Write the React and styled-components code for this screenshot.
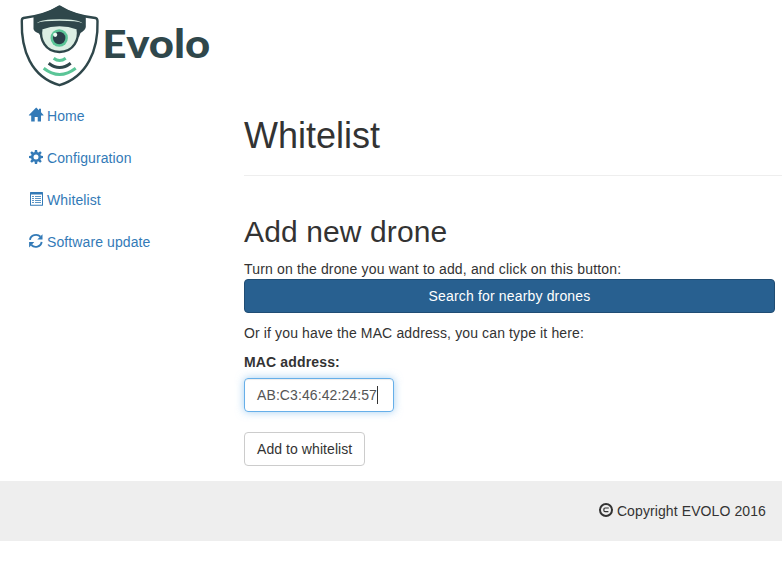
import React from "react";
import styled, { createGlobalStyle } from "styled-components";

const GlobalStyle = createGlobalStyle`
  *, *::before, *::after { box-sizing: border-box; }
  html, body { margin: 0; background: #fff; overflow: hidden; }
  body {
    font-family: "Liberation Sans", Helvetica, Arial, sans-serif;
    font-size: 14px;
    line-height: 20px;
    color: #333;
  }
`;

const Header = styled.header`
  height: 96px;
  padding: 4px 0 0 19px;
`;

const LogoSvg = styled.svg`
  display: block;
  width: 192px;
  height: 84px;
`;

const Wordmark = styled.text`
  font-family: "Lato", sans-serif;
  font-weight: 900;
  font-size: ${(p) => (p.$capital ? 37.5 : 39.5)}px;
  fill: #2f474b;
`;

const Body = styled.div`
  display: grid;
  grid-template-columns: 244px 1fr;
  height: 385px;
`;

const Nav = styled.nav`
  display: flex;
  flex-direction: column;
  gap: 2px;
  padding-left: 14px;
`;

const NavLink = styled.a`
  display: flex;
  align-items: center;
  gap: 4px;
  padding: 10px 15px;
  color: #337ab7;
  letter-spacing: 0.1px;
  text-decoration: none;
`;

const Glyph = styled.svg`
  flex: none;
  width: 14px;
  height: 14px;
  margin-top: -2px;
  fill: currentColor;
  overflow: visible;
`;

const Main = styled.main`
  padding-top: 20px;
`;

const PageTitle = styled.h1`
  margin: 0 0 39px;
  padding-bottom: 20px;
  border-bottom: 1px solid #eee;
  font-size: 36px;
  font-weight: 400;
  line-height: 39.6px;
  height: 60px;
`;

const SectionTitle = styled.h2`
  margin: 0 0 11px;
  font-size: 30px;
  font-weight: 400;
  line-height: 33px;
  letter-spacing: 0.12px;
`;

const Form = styled.form`
  display: flex;
  flex-direction: column;
  align-items: flex-start;
  padding-right: 7px;
`;

const Text = styled.p`
  margin: 0 0 ${(p) => (p.$spaced ? 9 : 0)}px;
  letter-spacing: ${(p) => (p.$spaced ? 0.13 : 0.16)}px;
`;

const Button = styled.button`
  height: 34px;
  padding: 6px 12px;
  border: 1px solid ${(p) => (p.$primary ? "#204d74" : "#ccc")};
  border-radius: 4px;
  background: ${(p) => (p.$primary ? "#286090" : "#fff")};
  color: ${(p) => (p.$primary ? "#fff" : "#333")};
  font: inherit;
  letter-spacing: ${(p) => (p.$primary ? 0.16 : 0.07)}px;
  width: ${(p) => (p.$primary ? "100%" : "auto")};
  margin-bottom: ${(p) => (p.$primary ? 10 : 0)}px;
`;

const Label = styled.label`
  margin-bottom: 6px;
  font-weight: 700;
  letter-spacing: 0.15px;
`;

const Field = styled.div`
  display: flex;
  align-items: center;
  width: 150px;
  height: 34px;
  margin-bottom: 20px;
  padding: 0 12px;
  border: 1px solid #66afe9;
  border-radius: 4px;
  color: #555;
  letter-spacing: 0.1px;
  box-shadow: inset 0 1px 1px rgba(0, 0, 0, 0.075), 0 0 8px rgba(102, 175, 233, 0.6);
`;

const Caret = styled.span`
  width: 1px;
  height: 18px;
  background: #333;
`;

const Footer = styled.footer`
  display: flex;
  align-items: center;
  justify-content: flex-end;
  gap: 4px;
  height: 60px;
  padding-right: 16px;
  background: #eee;
  letter-spacing: 0.1px;
`;

const Logo = () => (
  <LogoSvg viewBox="19 4 192 84" role="img" aria-label="Evolo">
    <path
      d="M59.5 6.6 C51 12 37 16.5 23.5 18 Q21.8 18.4 21.8 21 C21 50 31 77 59.5 85.2 C87 77 98.5 50 97.5 21 Q97.3 18.3 95.5 18 C81 16.5 68 12 59.5 6.6Z"
      fill="#fff" stroke="#2f474b" strokeWidth="2.4" strokeLinejoin="round"
    />
    <path
      d="M59.5 5.5 C51 10.5 42 14 33.5 16 L33.5 29 Q34 31.5 39 33.5 L41 37 L79 37 L80.5 33 Q85.5 30 85.8 27 L85.8 16 C77 14 68 11 59.5 5.5Z"
      fill="#2f474b"
    />
    <path d="M41.4 28.5 Q59.5 21.5 77.6 28.5 C79.5 39 74 52 59.5 52 C45 52 39.5 39 41.4 28.5Z" fill="#dcefe4" stroke="#2f474b" strokeWidth="2.4" />
    <path d="M36.8 23.2 Q41 19.3 59.5 19.3 Q78 19.3 82.5 23.2 Q77 20.8 59.5 20.8 Q42 20.8 36.8 23.2Z" fill="#dcefe4" />
    <circle cx="59.2" cy="38" r="8.7" fill="#5bc597" />
    <circle cx="59.2" cy="38" r="6.2" fill="#2a3f49" />
    <circle cx="55.2" cy="34.8" r="2.1" fill="#edf9f2" />
    <g fill="none" strokeWidth="3">
      <path d="M53.7 58.2 Q59.5 62.7 65.7 58.2" stroke="#5bc597" />
      <path d="M48.7 63.2 Q59.5 71.7 70.7 63.2" stroke="#2f474b" />
      <path d="M43.7 68.3 Q59.5 80.7 75.7 68.3" stroke="#5bc597" />
    </g>
    <Wordmark $capital x="102.6" y="58.4" textLength="24" lengthAdjust="spacingAndGlyphs">E</Wordmark>
    <Wordmark x="126.3" y="58.4" textLength="84" lengthAdjust="spacingAndGlyphs">volo</Wordmark>
  </LogoSvg>
);

const HomeIcon = () => (
  <Glyph viewBox="0 0 14 14">
    <path d="M7.2 -0.6 L10 2.2 V0.7 H12 V4.3 L14.5 7 V7.6 H12 V13.4 H8.7 V9 H5.7 V13.4 H2.2 V7.6 H-0.1 V7Z" />
  </Glyph>
);

const teeth = [0, 45, 90, 135, 180, 225, 270, 315];

const CogIcon = () => (
  <Glyph viewBox="0 0 14 14">
    <circle cx="7" cy="7" r="3.75" fill="none" stroke="currentColor" strokeWidth="2.5" />
    {teeth.map((angle) => (
      <path key={angle} d="M5.5 2.8 L5.9 0 H8.1 L8.5 2.8Z" transform={`rotate(${angle} 7 7)`} />
    ))}
  </Glyph>
);

const ListIcon = () => (
  <Glyph viewBox="0 0 14 14">
    <path fillRule="evenodd" d="M1.6 0 H13.4 Q14 0 14 0.6 V13.2 Q14 13.8 13.4 13.8 H1.6 Q1 13.8 1 13.2 V0.6 Q1 0 1.6 0Z M2 2.6 V12.8 H13 V2.6Z" />
    <path opacity="0.8" d="M3 4h2v1H3z M6 4h6v1H6z M3 6h2v1H3z M6 6h6v1H6z M3 8h2v1H3z M6 8h6v1H6z M3 10h2v1H3z M6 10h6v1H6z" />
  </Glyph>
);

const RefreshIcon = () => (
  <Glyph viewBox="0 0 14 14">
    <path d="M1 5.9 C1.5 0.9 8.2 -0.7 11.4 2.7 M12.6 7.8 C12.1 12.8 5.6 14.4 2.4 11" fill="none" stroke="currentColor" strokeWidth="1.9" />
    <path d="M13.5 0.2 V5.6 H8.3Z M0.1 13.4 V8.1 H5.3Z" />
  </Glyph>
);

const CopyrightIcon = () => (
  <Glyph viewBox="0 0 14 14">
    <circle cx="7" cy="7" r="6" fill="none" stroke="currentColor" strokeWidth="2" />
    <path d="M9.8 5 H6 Q4.9 5 4.9 6.1 V7.5 Q4.9 8.6 6 8.6 H9.4" fill="none" stroke="currentColor" strokeWidth="1.2" />
  </Glyph>
);

export default function App() {
  return (
    <>
      <GlobalStyle />
      <Header>
        <Logo />
      </Header>
      <Body>
        <Nav>
          <NavLink href="#home"><HomeIcon />Home</NavLink>
          <NavLink href="#configuration"><CogIcon />Configuration</NavLink>
          <NavLink href="#whitelist"><ListIcon />Whitelist</NavLink>
          <NavLink href="#update"><RefreshIcon />Software update</NavLink>
        </Nav>
        <Main>
          <PageTitle>Whitelist</PageTitle>
          <SectionTitle>Add new drone</SectionTitle>
          <Form>
            <Text>Turn on the drone you want to add, and click on this button:</Text>
            <Button type="button" $primary>Search for nearby drones</Button>
            <Text $spaced>Or if you have the MAC address, you can type it here:</Text>
            <Label>MAC address:</Label>
            <Field role="textbox">AB:C3:46:42:24:57<Caret /></Field>
            <Button type="button">Add to whitelist</Button>
          </Form>
        </Main>
      </Body>
      <Footer><CopyrightIcon />Copyright EVOLO 2016</Footer>
    </>
  );
}
